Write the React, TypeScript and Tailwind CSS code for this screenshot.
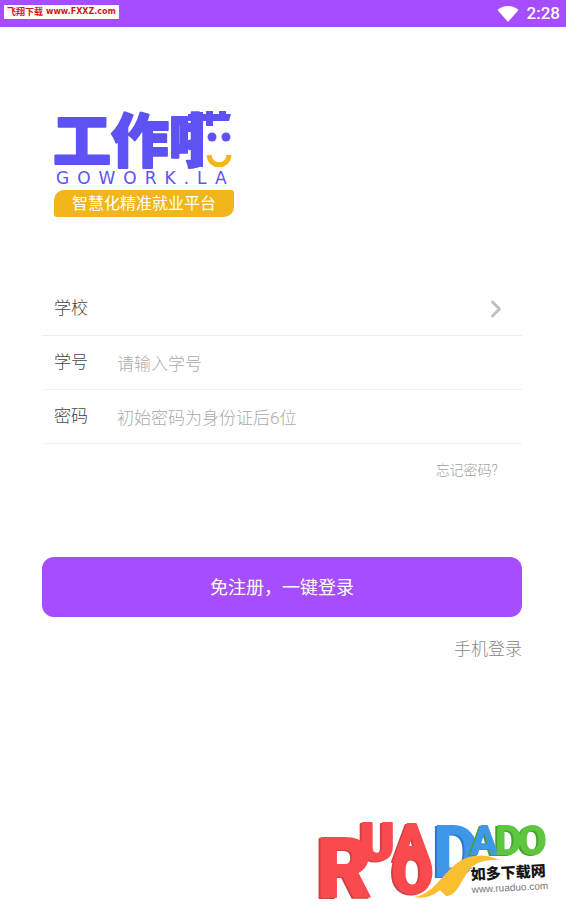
import { ChevronRight } from 'lucide-react'

function StatusBar() {
  return (
    <header className="flex h-[27px] items-center justify-between bg-[#a64dff] pl-1 pr-[6px]">
      <p className="mb-[3px] flex h-[14px] items-center gap-[3px] bg-white px-[3px] text-[9px] font-bold leading-none text-[#d01818]">
        <span>飞翔下载</span>
        <span className="font-['DejaVu_Sans'] text-[8px]">www.FXXZ.com</span>
      </p>
      <div className="flex items-center gap-2 text-white">
        <svg viewBox="0 0 22 16" className="h-4 w-[22px]" fill="currentColor" aria-hidden="true">
          <path d="M0.500 4C3.500 1.500 7 0 11 0s7.500 1.500 10.500 4L11 16z" />
        </svg>
        <span className="text-[17px] font-medium leading-none">2:28</span>
      </div>
    </header>
  )
}

function Logo() {
  return (
    <div className="w-[180px]">
      <svg viewBox="0 0 180 82" className="block h-[82px] w-[180px] overflow-visible" role="img" aria-label="工作啦">
        <text
          x="-1"
          y="58"
          fontSize="58"
          fontWeight="900"
          fill="#5f52f5"
          stroke="#5f52f5"
          strokeWidth="2"
          strokeLinejoin="round"
        >
          工作啦
        </text>
        {/* the face takes the place of the last character's right half */}
        <path d="M149 2h33v63h-33z" fill="#fff" />
        <path d="M134 10h43l-2 7h-41z M142 8h7v54l-7 2z M152 7h7v15h-7z M165 7h7v8h-7z" fill="#5f52f5" />
        <circle cx="158" cy="33" r="4.500" fill="#5f52f5" />
        <circle cx="172" cy="33" r="4.500" fill="#5f52f5" />
        <path d="M155 51c1 13 19 13 20 0" fill="none" stroke="#f2b51b" strokeWidth="5" />
        <text x="2" y="80" fontSize="17" fill="#5f52f5" className="font-['DejaVu_Sans'] tracking-[8px]">
          GOWORK.LA
        </text>
      </svg>
      <p className="mt-1 flex h-[27px] items-center justify-center rounded-[3px] rounded-tl-[10px] rounded-br-[10px] bg-[#f2b51b] text-[16px] text-white">
        智慧化精准就业平台
      </p>
    </div>
  )
}

function Field({ id, label, type, placeholder }: { id: string; label: string; type: string; placeholder: string }) {
  return (
    <div className="flex h-[54px] items-center border-b border-[#f2f2f2] pl-3">
      <label htmlFor={id} className="w-[63px] shrink-0 text-[17px] font-light text-[#444]">
        {label}
      </label>
      <input
        id={id}
        type={type}
        placeholder={placeholder}
        className="h-full min-w-0 flex-1 bg-transparent pt-[2px] text-[17px] font-light text-[#555] outline-none placeholder:text-[#aaa]"
      />
    </div>
  )
}

function Watermark() {
  return (
    <svg
      viewBox="0 0 236 92"
      className="absolute bottom-2 right-4 h-[92px] w-[236px] overflow-visible"
      role="img"
      aria-label="如多下载网"
    >
      <defs>
        <linearGradient id="mix">
          <stop offset="0.3" stopColor="#3f97ea" />
          <stop offset="0.5" stopColor="#5dc63f" />
        </linearGradient>
      </defs>
      <text
        strokeWidth="2"
        strokeLinejoin="round"
        fill="#fb4a4e"
        stroke="#fb4a4e"
        className="font-['Roboto'] font-black [filter:drop-shadow(-2px_1px_0_#cf4044)]"
      >
        <tspan x="3" y="82" fontSize="84">R</tspan>
        <tspan x="46" y="45" fontSize="52">U</tspan>
        <tspan x="80" y="46" fontSize="52">A</tspan>
        <tspan x="78" y="78" fontSize="60">O</tspan>
      </text>
      <text fill="#3f97ea" className="font-['Roboto'] font-black [filter:drop-shadow(-2px_1px_0_#2f78c4)]">
        <tspan x="119" y="62" fontSize="72">D</tspan>
      </text>
      <text fill="#5dc63f" className="font-['Roboto'] font-black [filter:drop-shadow(-2px_1px_0_#45a030)]">
        <tspan x="156" y="40" fontSize="42" fill="url(#mix)">A</tspan>
        <tspan x="181" y="40" fontSize="42">D</tspan>
        <tspan x="204" y="40" fontSize="42">O</tspan>
      </text>
      <path d="M100 82c24-2 32-37 60-41 14-2 20 2 26 4-28-1-30 8-42 28-4 6-8 8-12 8l-6-6c-8 7-18 9-26 7z" fill="#f9bf30" />
      <g transform="rotate(-3 157 65)">
        <text
          x="157"
          y="65"
          fontSize="15"
          fontWeight="900"
          fill="#151515"
          stroke="#fff"
          strokeWidth="2"
          paintOrder="stroke"
        >
          如多下载网
        </text>
        <text x="157" y="78" fontSize="10" fill="#777" className="font-['Liberation_Sans']">
          www.ruaduo.com
        </text>
      </g>
    </svg>
  )
}

export default function App() {
  return (
    <div className="relative min-h-screen bg-white pb-28 font-['Roboto','Noto_Sans_CJK_SC',sans-serif]">
      <StatusBar />
      <main className="pl-[42px] pr-11 pt-[77px]">
        <div className="pl-3">
          <Logo />
        </div>
        <form className="mt-[65px]" onSubmit={(e) => e.preventDefault()}>
          <div className="relative flex h-[54px] items-center border-b border-[#efefef] pl-3">
            <label htmlFor="school" className="w-[63px] shrink-0 text-[17px] font-light text-[#444]">
              学校
            </label>
            <select id="school" className="h-full min-w-0 flex-1 appearance-none bg-transparent text-[17px] outline-none">
              <option value="" />
            </select>
            <ChevronRight
              size={28}
              strokeWidth={2.5}
              className="pointer-events-none absolute right-3 text-[#c0c0c0]"
            />
          </div>
          <Field id="number" label="学号" type="text" placeholder="请输入学号" />
          <Field id="password" label="密码" type="password" placeholder="初始密码为身份证后6位" />
          <div className="flex justify-end pr-6 pt-4">
            <a href="#forgot" className="text-[14px] font-light leading-5 text-[#a0a0a0]">
              忘记密码?
            </a>
          </div>
          <button type="submit" className="mt-[77px] h-[60px] w-full rounded-xl bg-[#a64dff] text-[18px] text-white">
            免注册，一键登录
          </button>
          <div className="mt-5 flex justify-end">
            <a href="#phone" className="text-[17px] font-light leading-6 text-[#888]">
              手机登录
            </a>
          </div>
        </form>
      </main>
      <Watermark />
    </div>
  )
}
